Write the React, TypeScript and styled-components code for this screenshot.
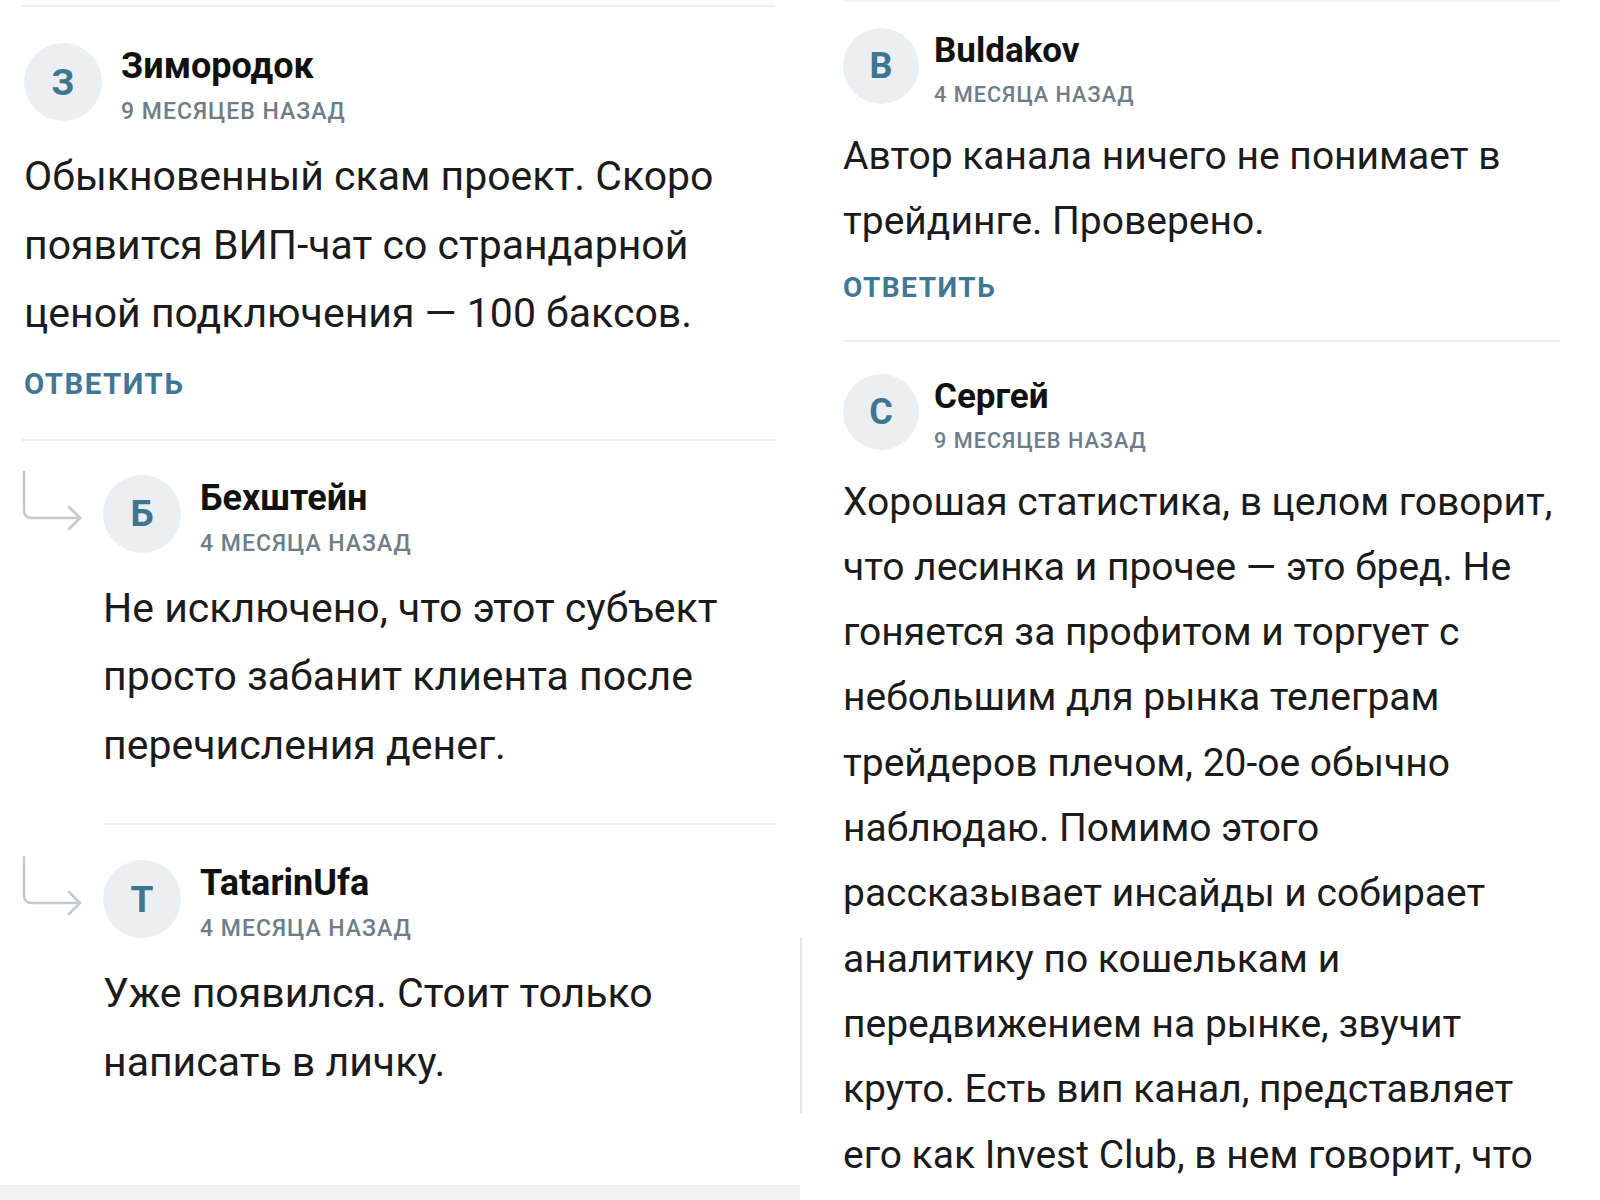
import React from "react";
import styled, { createGlobalStyle } from "styled-components";

type Scale = {
    avatar: number;
    letter: number;
    name: number;
    date: number;
    nameGap: number;
    metaGap: number;
    headGap: number;
    body: number;
    lh: number;
    bodyPad: number;
    reply: number;
};

const leftScale: Scale = {
    avatar: 78,
    letter: 37,
    name: 36,
    date: 23,
    nameGap: 11,
    metaGap: 19,
    headGap: 15,
    body: 41,
    lh: 68.5,
    bodyPad: 20,
    reply: 29.4,
};

const rightScale: Scale = {
    avatar: 76,
    letter: 36,
    name: 35,
    date: 21.7,
    nameGap: 9,
    metaGap: 15,
    headGap: 13.5,
    body: 39,
    lh: 65.3,
    bodyPad: 0,
    reply: 28,
};

const GlobalStyle = createGlobalStyle`
    body {
        margin: 0;
        background: #ffffff;
        font-family: Roboto, "Noto Sans", sans-serif;
    }
`;

const ReplyArrow: React.FC = () => (
    <ArrowIcon width="60" height="60" viewBox="0 0 60 60" fill="none">
        <path
            d="M2 2 V40 Q2 48 10 48 H58"
            stroke="#c5c9cd"
            strokeWidth="2.6"
            strokeLinecap="round"
        />
        <path
            d="M47 37 L58 48 L47 59"
            stroke="#c5c9cd"
            strokeWidth="2.6"
            strokeLinecap="round"
            strokeLinejoin="round"
        />
    </ArrowIcon>
);

type CommentProps = {
    s: Scale;
    letter: string;
    name: string;
    date: string;
    text: string;
};

const Comment: React.FC<CommentProps> = ({ s, letter, name, date, text }) => (
    <>
        <Header>
            <Avatar $s={s}>{letter}</Avatar>
            <Meta $s={s}>
                <Name $s={s}>{name}</Name>
                <Date $s={s}>{date}</Date>
            </Meta>
        </Header>
        <Body $s={s}>{text}</Body>
    </>
);

const App: React.FC = () => {
    return (
        <Page>
            <GlobalStyle />
            <LeftColumn>
                <Divider $top={5} $right={25} />
                <Thread $top={36} $indent={2}>
                    <Comment
                        s={leftScale}
                        letter="З"
                        name="Зимородок"
                        date="9 месяцев назад"
                        text="Обыкновенный скам проект. Скоро появится ВИП-чат со страндарной ценой подключения — 100 баксов."
                    />
                    <ReplyLink $s={leftScale} $top={18}>Ответить</ReplyLink>
                </Thread>
                <Divider $top={37} $right={25} />
                <ReplyRow $top={34}>
                    <ReplyArrow />
                    <ReplyBody>
                        <Comment
                            s={leftScale}
                            letter="Б"
                            name="Бехштейн"
                            date="4 месяца назад"
                            text="Не исключено, что этот субъект просто забанит клиента после перечисления денег."
                        />
                        <Divider $top={44} $right={25} />
                    </ReplyBody>
                </ReplyRow>
                <ReplyRow $top={35}>
                    <ReplyArrow />
                    <ReplyBody>
                        <Comment
                            s={leftScale}
                            letter="T"
                            name="TatarinUfa"
                            date="4 месяца назад"
                            text="Уже появился. Стоит только написать в личку."
                        />
                    </ReplyBody>
                </ReplyRow>
                <Spacer />
                <BottomBar />
            </LeftColumn>
            <Seam />
            <RightColumn>
                <Divider $top={0} $right={0} $faint />
                <Thread $top={26} $indent={0}>
                    <Comment
                        s={rightScale}
                        letter="B"
                        name="Buldakov"
                        date="4 месяца назад"
                        text="Автор канала ничего не понимает в трейдинге. Проверено."
                    />
                    <ReplyLink $s={rightScale} $top={16}>Ответить</ReplyLink>
                </Thread>
                <Divider $top={34} $right={0} />
                <Thread $top={32} $indent={0}>
                    <Comment
                        s={rightScale}
                        letter="C"
                        name="Сергей"
                        date="9 месяцев назад"
                        text="Хорошая статистика, в целом говорит, что лесинка и прочее — это бред. Не гоняется за профитом и торгует с небольшим для рынка телеграм трейдеров плечом, 20-ое обычно наблюдаю. Помимо этого рассказывает инсайды и собирает аналитику по кошелькам и передвижением на рынке, звучит круто. Есть вип канал, представляет его как Invest Club, в нем говорит, что"
                    />
                </Thread>
            </RightColumn>
        </Page>
    );
};

const Page = styled.div`
    width: 1600px;
    height: 1200px;
    display: flex;
    overflow: hidden;
    background: #ffffff;
`;

const LeftColumn = styled.div`
    width: 800px;
    height: 1200px;
    flex-shrink: 0;
    display: flex;
    flex-direction: column;
    padding-left: 22px;
    box-sizing: border-box;
`;

const RightColumn = styled.div`
    flex: 1;
    height: 1200px;
    overflow: hidden;
    display: flex;
    flex-direction: column;
    padding: 0 40px 0 41px;
    box-sizing: border-box;
`;

const Seam = styled.div`
    width: 2px;
    height: 175px;
    margin-top: 938px;
    background: #e4e6e8;
    flex-shrink: 0;
`;

const Divider = styled.div<{ $top: number; $right: number; $faint?: boolean }>`
    height: 2px;
    margin-top: ${(p) => p.$top}px;
    margin-right: ${(p) => p.$right}px;
    background: ${(p) => (p.$faint ? "#f4f5f6" : "#eceef0")};
    flex-shrink: 0;
`;

const Thread = styled.div<{ $top: number; $indent: number }>`
    margin-top: ${(p) => p.$top}px;
    padding-left: ${(p) => p.$indent}px;
    display: flex;
    flex-direction: column;
`;

const ReplyRow = styled.div<{ $top: number }>`
    margin-top: ${(p) => p.$top}px;
    display: flex;
    align-items: flex-start;
`;

const ArrowIcon = styled.svg`
    flex-shrink: 0;
    margin-top: -5px;
    margin-right: 21px;
`;

const ReplyBody = styled.div`
    flex: 1;
    display: flex;
    flex-direction: column;
`;

const Header = styled.div`
    display: flex;
    align-items: flex-start;
`;

const Avatar = styled.div<{ $s: Scale }>`
    width: ${(p) => p.$s.avatar}px;
    height: ${(p) => p.$s.avatar}px;
    border-radius: 50%;
    background: #eceff2;
    color: #3e7590;
    font-size: ${(p) => p.$s.letter}px;
    font-weight: 700;
    display: flex;
    align-items: center;
    justify-content: center;
    flex-shrink: 0;
`;

const Meta = styled.div<{ $s: Scale }>`
    margin-left: ${(p) => p.$s.metaGap}px;
    padding-top: 3px;
    display: flex;
    flex-direction: column;
`;

const Name = styled.div<{ $s: Scale }>`
    font-size: ${(p) => p.$s.name}px;
    line-height: 40px;
    font-weight: 700;
    color: #111111;
`;

const Date = styled.div<{ $s: Scale }>`
    margin-top: ${(p) => p.$s.nameGap}px;
    font-size: ${(p) => p.$s.date}px;
    line-height: 30px;
    font-weight: 500;
    letter-spacing: 1px;
    text-transform: uppercase;
    color: #6f7d8a;
`;

const Body = styled.div<{ $s: Scale }>`
    margin-top: ${(p) => p.$s.headGap}px;
    padding-right: ${(p) => p.$s.bodyPad}px;
    font-size: ${(p) => p.$s.body}px;
    line-height: ${(p) => p.$s.lh}px;
    color: #1b1b1b;
`;

const ReplyLink = styled.div<{ $s: Scale; $top: number }>`
    margin-top: ${(p) => p.$top}px;
    font-size: ${(p) => p.$s.reply}px;
    line-height: 36px;
    font-weight: 700;
    letter-spacing: 1.5px;
    text-transform: uppercase;
    color: #3f7894;
`;

const Spacer = styled.div`
    flex: 1;
`;

const BottomBar = styled.div`
    height: 15px;
    margin-left: -22px;
    background: #eff2f4;
    flex-shrink: 0;
`;

export default App;
